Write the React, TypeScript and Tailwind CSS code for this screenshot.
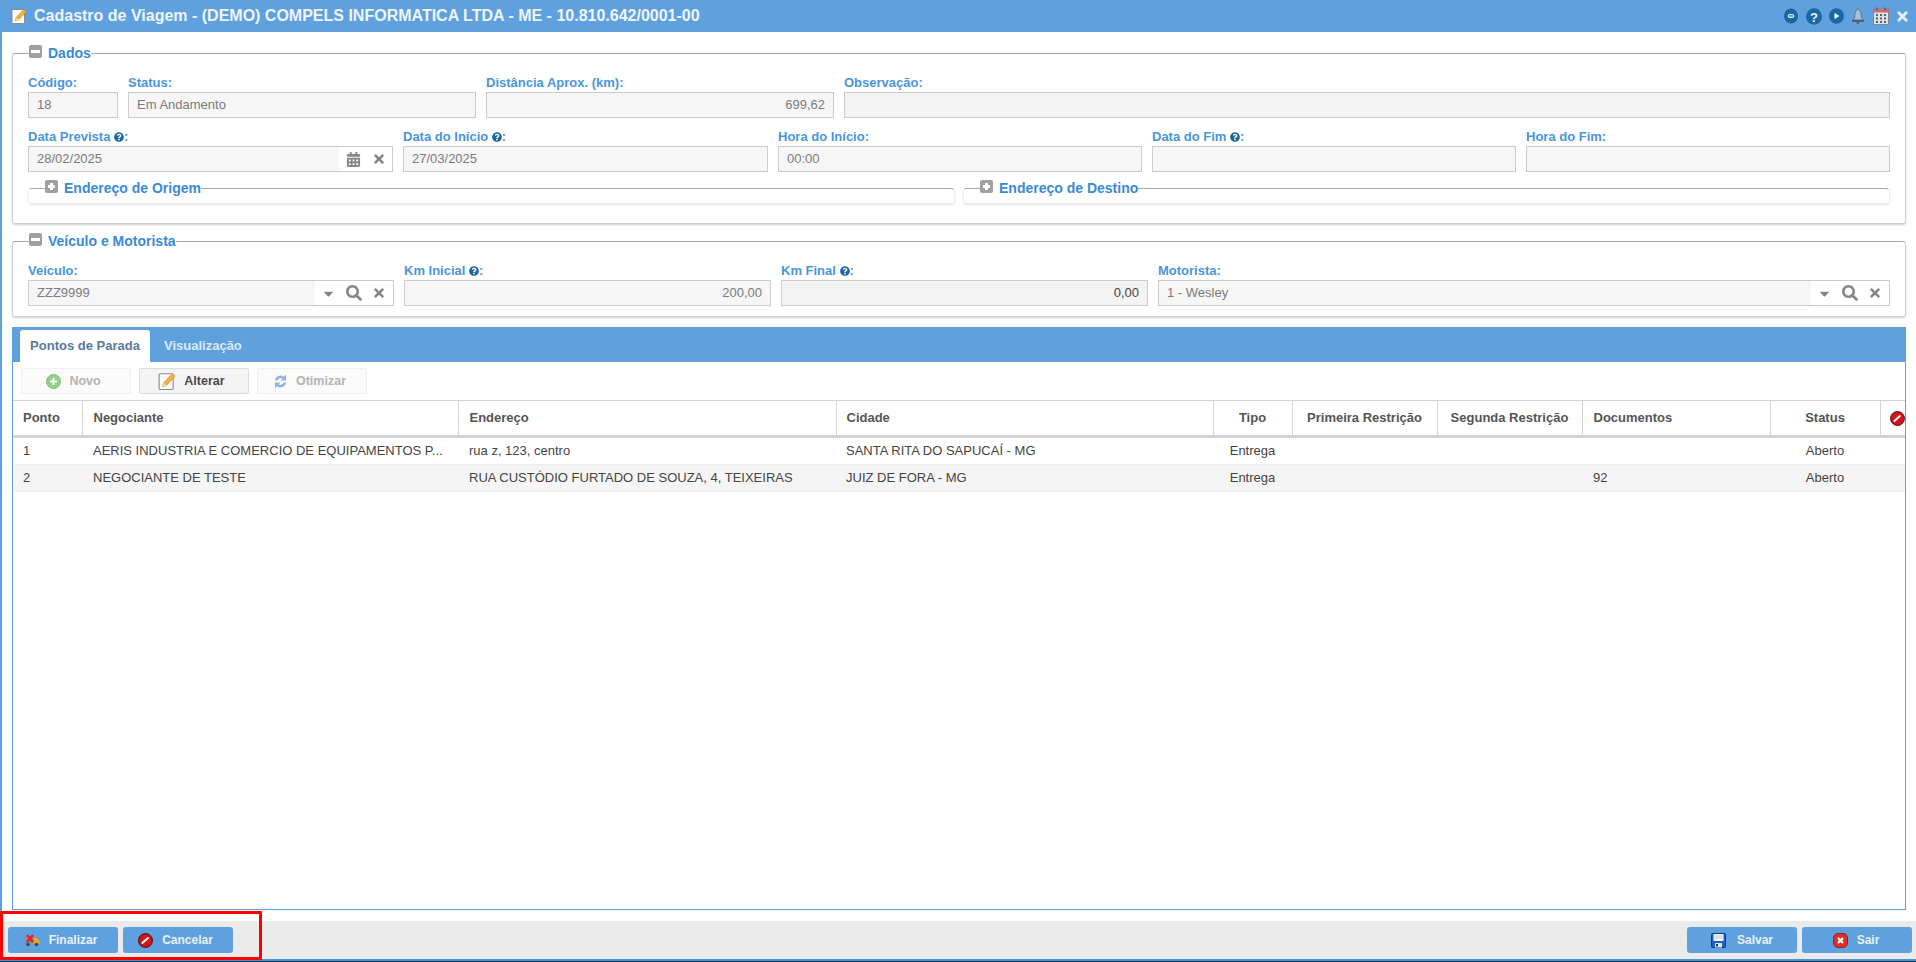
import React from "react";
import { FaCalendarAlt, FaTimes, FaSearch, FaCaretDown, FaQuestionCircle } from "react-icons/fa";

function BoxIcon({ plus }: { plus?: boolean }) {
  return (
    <span className="relative mb-[4px] flex h-[13px] w-[13px] shrink-0 items-center justify-center rounded-[2px] bg-[#a0a0a0]">
      <span className={`h-[3px] bg-white ${plus ? "w-[7px]" : "w-[9px]"}`} />
      {plus && <span className="absolute h-[7px] w-[3px] bg-white" />}
    </span>
  );
}

function Group({ title, children, className }: { title: string; children?: React.ReactNode; className: string }) {
  return (
    <fieldset className={className}>
      <legend className="ml-px flex h-4 items-center gap-[6px] text-[14px] font-bold text-[#3b8ad6]">
        <BoxIcon />
        <span>{title}</span>
      </legend>
      {children}
    </fieldset>
  );
}

function SubGroup({ title }: { title: string }) {
  return (
    <fieldset className="h-[24px] min-w-0 flex-1 rounded-[4px] border border-[#f0f0f0] border-t-[#aaaaaa] shadow-[0_1px_2px_rgba(0,0,0,0.12)]">
      <legend className="ml-[16px] flex h-4 items-center gap-[6px] text-[14px] font-bold text-[#3b8ad6]">
        <BoxIcon plus />
        <span>{title}</span>
      </legend>
    </fieldset>
  );
}

function Field({ label, help, value, right, dark, actions, className, bg = "bg-[#f6f6f6]" }: {
  label: string; help?: boolean; value?: string; right?: boolean; dark?: boolean; actions?: React.ReactNode; className?: string; bg?: string;
}) {
  return (
    <div className={className}>
      <div className="mb-[2px] flex h-[14px] items-center whitespace-pre text-[13px] leading-[14px] font-bold text-[#4a95dc]">
        {label}
        {help && <FaQuestionCircle className="text-[10px] text-[#1b66a3]" />}
        {help && ":"}
      </div>
      <div className={`flex h-[26px] items-stretch border border-[#cccccc] text-[13px] ${bg}`}>
        <div className={`flex min-w-0 flex-1 items-center px-2 ${right ? "justify-end" : ""} ${dark ? "text-[#444444]" : "text-[#7b7b7b]"}`}>{value}</div>
        {actions}
      </div>
    </div>
  );
}

function DateActions() {
  return (
    <div className="flex w-[53px] items-center bg-white pl-[7px] text-[#858585]">
      <FaCalendarAlt className="text-[15px]" />
      <FaTimes className="ml-[11px] text-[14px]" />
    </div>
  );
}

function LookupActions() {
  return (
    <div className="flex w-[78px] items-center bg-white pl-[6px] text-[#858585]">
      <FaCaretDown className="text-[15px]" />
      <FaSearch className="ml-[10px] text-[16px]" />
      <FaTimes className="ml-[10px] text-[14px]" />
    </div>
  );
}

function NoteIcon({ size = 16 }: { size?: number }) {
  return (
    <svg width={size} height={size} viewBox="0 0 16 16" className="shrink-0">
      <rect x="1" y="1.5" width="12.5" height="14" rx="1" fill="#fdfdfd" stroke="#8a8a8a" />
      <path d="M4 13l1-3.5L12 2.2a1.2 1.2 0 0 1 1.8 0l.6.6a1.2 1.2 0 0 1 0 1.8L7.4 12z" fill="#f0b43c" stroke="#c98a1e" strokeWidth=".6" />
      <path d="M4 13l1-3.5 2.4 2.5z" fill="#f6dca8" />
    </svg>
  );
}

function NoEntry({ size = 15 }: { size?: number }) {
  return (
    <svg width={size} height={size} viewBox="0 0 16 16" className="shrink-0">
      <circle cx="8" cy="8" r="7.4" fill="#d8101a" stroke="#3a0a0a" strokeWidth="1" />
      <path d="M4.6 10.6l6-5.2" stroke="#fff" strokeWidth="2.2" strokeLinecap="round" />
    </svg>
  );
}

function TruckIcon() {
  return (
    <svg width="16" height="14" viewBox="0 0 16 14" className="shrink-0">
      <rect x="1" y="3" width="9" height="7" fill="#8b8f96" />
      <path d="M10 5h3l2.5 3v3H10z" fill="#e6a92a" />
      <circle cx="4" cy="11.5" r="1.8" fill="#444" />
      <circle cx="12.5" cy="11.5" r="1.8" fill="#444" />
      <path d="M3 2l6 7M9 2L3 9" stroke="#e0242a" strokeWidth="2.4" />
    </svg>
  );
}

function FloppyIcon() {
  return (
    <svg width="15" height="15" viewBox="0 0 15 15" className="shrink-0">
      <rect x=".5" y=".5" width="14" height="14" rx="1" fill="#1f5fc4" stroke="#123a80" />
      <rect x="2.5" y="1" width="10" height="7" fill="#f4f6fa" />
      <path d="M3 3h9M3 5h9" stroke="#b8c4d8" strokeWidth=".8" />
      <rect x="4" y="10" width="7" height="4.5" fill="#dfe3ea" />
      <rect x="5" y="11" width="2" height="2.5" fill="#333" />
    </svg>
  );
}

function ExitIcon() {
  return (
    <svg width="15" height="15" viewBox="0 0 15 15" className="shrink-0">
      <rect x=".5" y=".5" width="14" height="14" rx="4.5" fill="#d9302c" stroke="#a81a18" />
      <path d="M5 5l5 5M10 5l-5 5" stroke="#fff" strokeWidth="2.2" />
    </svg>
  );
}

function PlusCircle() {
  return (
    <svg width="15" height="15" viewBox="0 0 15 15" className="shrink-0">
      <circle cx="7.5" cy="7.5" r="7" fill="#93d08a" stroke="#7fbf77" />
      <path d="M7.5 4v7M4 7.5h7" stroke="#fff" strokeWidth="2" />
    </svg>
  );
}

function RefreshIcon() {
  return (
    <svg width="15" height="17" viewBox="0 0 15 17" className="shrink-0">
      <path d="M2 7.500a5.500 5.500 0 0 1 9-3.700L13 1.500v6H7.500l2-2A3.400 3.400 0 0 0 4.500 7.500z" fill="#8fb2ea" />
      <path d="M13 9.500a5.500 5.500 0 0 1-9 3.700L2 15.500v-6h5.500l-2 2a3.400 3.400 0 0 0 5-2z" fill="#8fb2ea" />
    </svg>
  );
}

function TitleIcons() {
  return (
    <div className="ml-auto flex items-center pr-[6px]">
      <svg width="14" height="16" viewBox="0 0 14 16" className="mr-[8px]">
        <ellipse cx="7" cy="8" rx="7" ry="7.600" fill="#1b66a3" />
        <rect x="3.800" y="6" width="6.400" height="4" rx="1.800" fill="#dfeaf5" />
        <rect x="5" y="7.300" width="4" height="1.200" fill="#1b66a3" />
      </svg>
      <svg width="16" height="17" viewBox="0 0 16 17" className="mr-[7px]">
        <ellipse cx="8" cy="8.500" rx="8" ry="8.300" fill="#1b66a3" />
        <text x="8" y="13.500" textAnchor="middle" fontSize="13" fontWeight="700" fill="#eaf3fb" fontFamily="Liberation Sans">?</text>
      </svg>
      <svg width="15" height="16" viewBox="0 0 15 16" className="mr-[7px]">
        <ellipse cx="7.500" cy="8" rx="7.500" ry="7.800" fill="#1b66a3" />
        <path d="M5.500 4.800L10.500 8l-5 3.200z" fill="#eaf3fb" />
      </svg>
      <svg width="14" height="16" viewBox="0 0 14 16" className="mr-[8px]">
        <path d="M7 1c1 0 1.400.8 1.400 1.500C9.800 3.500 10 5 10.200 8c.1 2 .8 3 2.300 4H1.500C3 11 3.700 10 3.800 8 4 5 4.200 3.500 5.600 2.500 5.600 1.800 6 1 7 1z" fill="#a9c0d8" stroke="#56687c" strokeWidth=".8" />
        <rect x="1" y="12" width="12" height="1.800" fill="#4d5c6c" />
        <circle cx="7" cy="14.700" r="1.200" fill="#4d5c6c" />
      </svg>
      <svg width="16" height="18" viewBox="0 0 16 18" className="mr-[6px]">
        <rect x=".5" y="2" width="15" height="15.500" fill="#dfe3e8" stroke="#7d8792" />
        <rect x=".5" y="2" width="15" height="3.500" fill="#cf6a72" />
        <path d="M3 7h2v2H3zM7 7h2v2H7zM11 7h2v2h-2zM3 10.500h2v2H3zM7 10.500h2v2H7zM11 10.500h2v2h-2zM3 14h2v2H3zM7 14h2v2H7zM11 14h2v2h-2z" fill="#56616e" />
        <path d="M4 .5v3M12 .5v3" stroke="#555f6b" strokeWidth="1.400" />
      </svg>
      <FaTimes className="text-[15px] text-[#e6f0fa]" />
    </div>
  );
}

function ToolButton({ icon, label, active }: { icon: React.ReactNode; label: string; active?: boolean }) {
  return (
    <div className={`flex h-[26px] w-[110px] items-center justify-center gap-[8px] rounded-[2px] border pr-[5px] text-[12.5px] font-bold ${active ? "border-[#dddddd] bg-[#f4f4f4] text-[#4a4a4a]" : "border-[#f0f0f0] bg-[#fbfbfb] text-[#b4b4b4]"}`}>
      {icon}
      <span>{label}</span>
    </div>
  );
}

function FootButton({ icon, label, className }: { icon: React.ReactNode; label: string; className: string }) {
  return (
    <div className={`flex h-[26px] w-[110px] items-center justify-center rounded-[3px] bg-[#5fa0de] text-[12px] font-bold text-[#e9f2fb] ${className}`}>
      {icon}
      <span>{label}</span>
    </div>
  );
}

const th = "border-r border-[#d4d4d4] px-[11px] text-[13px] font-bold text-[#555555]";
const td = "px-[11px] whitespace-nowrap text-[13px] text-[#444444]";

export default function App() {
  return (
    <div className="relative flex h-[962px] w-full flex-col overflow-hidden bg-white font-['Liberation_Sans',Arial,sans-serif]">
      <header className="flex h-8 shrink-0 items-center bg-[#5fa0de] pl-[11px]">
        <NoteIcon />
        <h1 className="ml-[7px] whitespace-nowrap text-[16px] font-bold text-[#eef5fc]">
          Cadastro de Viagem - (DEMO) COMPELS INFORMATICA LTDA - ME - 10.810.642/0001-00
        </h1>
        <TitleIcons />
      </header>

      <main className="flex min-h-0 flex-1 flex-col border-l-2 border-[#5fa0de] pt-[13px]">
        <div className="flex min-h-0 flex-1 flex-col pr-[10px] pl-[10px]">
          <Group title="Dados" className="min-w-0 rounded-[3px] border border-[#cfcfcf] border-t-[#aaaaaa] pt-[15px] pr-[15px] pb-[19px] pl-[15px] shadow-[0_1px_2px_rgba(0,0,0,0.18)]">
            <div className="flex gap-[10px]">
              <Field className="w-[90px]" label="Código:" value="18" />
              <Field className="w-[348px]" label="Status:" value="Em Andamento" />
              <Field className="w-[348px]" label="Distância Aprox. (km):" value="699,62" right />
              <Field className="flex-1" label="Observação:" bg="bg-[#f3f3f3]" />
            </div>
            <div className="mt-[12px] grid grid-cols-[365px_365px_364px_364px_1fr] gap-[10px]">
              <Field label="Data Prevista " help value="28/02/2025" actions={<DateActions />} />
              <Field label="Data do Início " help value="27/03/2025" />
              <Field label="Hora do Início:" value="00:00" />
              <Field label="Data do Fim " help />
              <Field label="Hora do Fim:" />
            </div>
            <div className="mt-[8px] flex gap-[8px]">
              <SubGroup title="Endereço de Origem" />
              <SubGroup title="Endereço de Destino" />
            </div>
          </Group>

          <Group title="Veículo e Motorista" className="mt-[9px] min-w-0 rounded-[3px] border border-[#cfcfcf] border-t-[#aaaaaa] px-[15px] pt-[15px] pb-[10px] shadow-[0_1px_2px_rgba(0,0,0,0.18)]">
            <div className="flex gap-[10px]">
              <Field className="w-[366px]" label="Veículo:" value="ZZZ9999" actions={<LookupActions />} />
              <Field className="w-[367px]" label="Km Inicial " help value="200,00" right />
              <Field className="w-[367px]" label="Km Final " help value="0,00" right dark bg="bg-[#f3f3f3]" />
              <Field className="flex-1" label="Motorista:" value="1 - Wesley" actions={<LookupActions />} />
            </div>
          </Group>

          <section className="mt-[10px] flex min-h-0 flex-1 flex-col">
            <div className="flex h-[35px] shrink-0 items-end bg-[#5fa0de] pl-[8px]">
              <div className="flex h-8 w-[130px] items-center justify-center rounded-t-[3px] bg-white text-[13px] font-bold text-[#5a7a9a]">Pontos de Parada</div>
              <div className="ml-[14px] flex h-8 items-center text-[13px] font-bold text-[#dce9f7]">Visualização</div>
            </div>
            <div className="flex min-h-0 flex-1 flex-col border-x border-b border-[#5fa0de]">
              <div className="flex gap-[8px] pt-[6px] pl-[8px]">
                <ToolButton icon={<PlusCircle />} label="Novo" />
                <ToolButton active icon={<NoteIcon size={18} />} label="Alterar" />
                <ToolButton icon={<RefreshIcon />} label="Otimizar" />
              </div>
              <table className="mt-[6px] w-full table-fixed border-collapse">
                <colgroup>
                  <col className="w-[69px]" />
                  <col className="w-[376px]" />
                  <col className="w-[378px]" />
                  <col className="w-[377px]" />
                  <col className="w-[79px]" />
                  <col className="w-[145px]" />
                  <col className="w-[145px]" />
                  <col className="w-[188px]" />
                  <col className="w-[110px]" />
                  <col />
                </colgroup>
                <thead>
                  <tr className="h-[36px] border-t border-b-[3px] border-[#d4d4d4]">
                    <th className={`${th} !pl-[10px] text-left`}>Ponto</th>
                    <th className={`${th} text-left`}>Negociante</th>
                    <th className={`${th} text-left`}>Endereço</th>
                    <th className={`${th} !pl-[10px] text-left`}>Cidade</th>
                    <th className={`${th} text-center`}>Tipo</th>
                    <th className={`${th} !px-0 text-center`}>Primeira Restrição</th>
                    <th className={`${th} !px-0 text-center`}>Segunda Restrição</th>
                    <th className={`${th} text-left`}>Documentos</th>
                    <th className={`${th} text-center`}>Status</th>
                    <th className="pl-[9px]"><NoEntry /></th>
                  </tr>
                </thead>
                <tbody>
                  <tr className="h-[28px] border-b border-[#eeeeee]">
                    <td className={`${td} !pl-[10px]`}>1</td>
                    <td className={td}>AERIS INDUSTRIA E COMERCIO DE EQUIPAMENTOS P...</td>
                    <td className={td}>rua z, 123, centro</td>
                    <td className={`${td} !pl-[10px]`}>SANTA RITA DO SAPUCAÍ - MG</td>
                    <td className={`${td} text-center`}>Entrega</td>
                    <td className={td} />
                    <td className={td} />
                    <td className={td} />
                    <td className={`${td} text-center`}>Aberto</td>
                    <td className={td} />
                  </tr>
                  <tr className="h-[27px] border-b border-[#eeeeee] bg-[#f5f5f5]">
                    <td className={`${td} !pl-[10px]`}>2</td>
                    <td className={td}>NEGOCIANTE DE TESTE</td>
                    <td className={td}>RUA CUSTÓDIO FURTADO DE SOUZA, 4, TEIXEIRAS</td>
                    <td className={`${td} !pl-[10px]`}>JUIZ DE FORA - MG</td>
                    <td className={`${td} text-center`}>Entrega</td>
                    <td className={td} />
                    <td className={td} />
                    <td className={td}>92</td>
                    <td className={`${td} text-center`}>Aberto</td>
                    <td className={td} />
                  </tr>
                </tbody>
              </table>
            </div>
          </section>
        </div>

        <footer className="mt-[11px] flex h-[38px] shrink-0 items-center justify-between bg-[#ebebeb] pr-[4px] pl-[6px]">
          <div className="flex gap-[5px]">
            <FootButton className="gap-[9px] pr-[5px]" icon={<TruckIcon />} label="Finalizar" />
            <FootButton className="gap-[9px] pr-[5px]" icon={<NoEntry />} label="Cancelar" />
          </div>
          <div className="flex gap-[5px]">
            <FootButton className="gap-[11px]" icon={<FloppyIcon />} label="Salvar" />
            <FootButton className="gap-[9px] pr-[2px]" icon={<ExitIcon />} label="Sair" />
          </div>
        </footer>
      </main>
      <div className="h-[2px] shrink-0 bg-[#4f93d6]" />
      <div className="h-px shrink-0 bg-[#1c2c3c]" />

      <div className="pointer-events-none absolute top-[911px] left-0 h-[49px] w-[262px] border-[3px] border-[#ff0000]" />
    </div>
  );
}
